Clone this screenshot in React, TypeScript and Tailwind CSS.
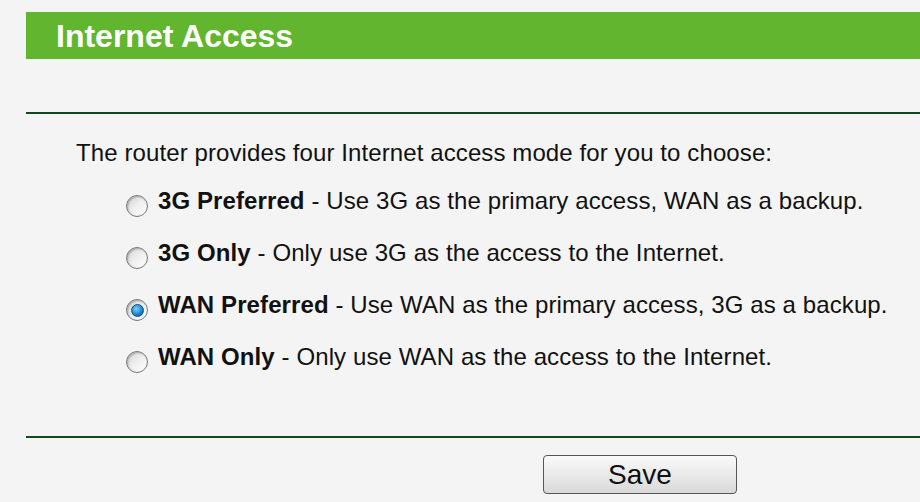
import React from "react"

const options = [
  { id: "3g-pref", name: "3G Preferred", desc: "Use 3G as the primary access, WAN as a backup." },
  { id: "3g-only", name: "3G Only", desc: "Only use 3G as the access to the Internet." },
  { id: "wan-pref", name: "WAN Preferred", desc: "Use WAN as the primary access, 3G as a backup." },
  { id: "wan-only", name: "WAN Only", desc: "Only use WAN as the access to the Internet." },
]

function Radio({ checked }: { checked: boolean }) {
  return (
    <span className="flex h-[22px] w-[22px] shrink-0 translate-y-[5px] items-center justify-center rounded-full border border-[#7a7a7a] bg-gradient-to-br from-[#d4d4d4] via-[#efefef] to-[#ffffff] shadow-[inset_1px_1px_2px_rgba(0,0,0,0.25)]">
      {checked && (
        <span className="h-[13px] w-[13px] rounded-full border border-[#0d4f87] bg-[radial-gradient(circle_at_40%_35%,#7fd0ff,#1a7fc9_60%,#0b4c86)]" />
      )}
    </span>
  )
}

export default function App() {
  const selected = "wan-pref"

  return (
    <div className="h-[502px] w-[920px] overflow-hidden bg-[#f4f4f4] font-['Liberation_Sans',Arial,sans-serif] text-[#111]">
      <div className="pl-[26px] pt-[12px]">
        <div className="flex h-[47px] items-center bg-[#62b52f] pl-[30px]">
          <h1 className="text-[32px] font-bold leading-none text-white">Internet Access</h1>
        </div>

        <div className="mt-[53px] border-t-2 border-[#0e4a20]" />

        <div className="pl-[50px] pt-[26px]">
          <p className="text-[24px] leading-[26px] tracking-[0.1px]">
            The router provides four Internet access mode for you to choose:
          </p>

          <div className="mt-[22px] flex flex-col gap-[26px] pl-[50px]">
            {options.map((o) => (
              <label key={o.id} className="flex items-center gap-[10px] text-[24px] leading-[26px] tracking-[0.1px]">
                <Radio checked={o.id === selected} />
                <span>
                  <b className="font-bold">{o.name}</b> - {o.desc}
                </span>
              </label>
            ))}
          </div>
        </div>

        <div className="mt-[66px] border-t-2 border-[#0e4a20]" />

        <div className="flex pl-[517px] pt-[17px]">
          <button className="h-[39px] w-[194px] rounded-[4px] border border-[#555] bg-gradient-to-b from-[#fafafa] to-[#d9d9d9] text-[28px] leading-none text-[#111]">
            Save
          </button>
        </div>
      </div>
    </div>
  )
}
